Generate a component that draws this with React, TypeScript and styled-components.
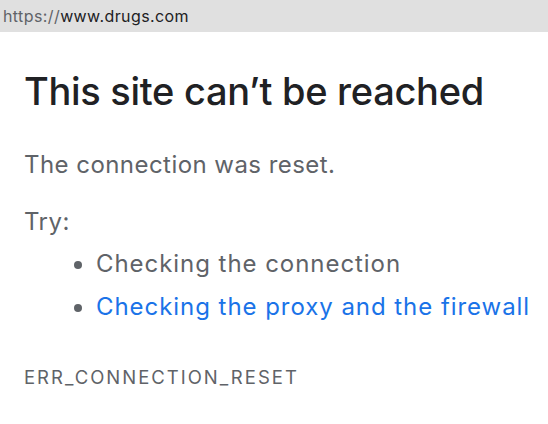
import * as React from 'react';
import styled, { createGlobalStyle } from 'styled-components';

const GlobalStyle = createGlobalStyle`
  html, body {
    margin: 0;
    padding: 0;
    background: #ffffff;
  }
  body {
    font-family: Inter, "Liberation Sans", sans-serif;
    -webkit-font-smoothing: antialiased;
  }
`;

const UrlBar = styled.div`
  height: 32px;
  background: #e0e0e0;
  display: flex;
  align-items: center;
  padding: 0 3px;
  font-size: 16px;
  letter-spacing: 0.4px;
  color: #202124;
`;

const Scheme = styled.span`
  color: #5f6368;
`;

const Page = styled.main`
  padding: 36px 24px 0;
  color: #5f6368;
`;

const Title = styled.h1`
  margin: 0;
  font-size: 38px;
  font-weight: 500;
  line-height: 46px;
  color: #202124;
  letter-spacing: -0.3px;
`;

const Text = styled.p<{ $top: number }>`
  margin: ${(p) => p.$top}px 0 0;
  font-size: 24px;
  line-height: 32px;
  letter-spacing: 0.45px;
`;

const List = styled.ul`
  margin: 4px 0 0;
  padding-left: 72px;
  font-size: 24px;
  line-height: 43px;
  letter-spacing: 0.95px;
  white-space: nowrap;
`;

const Item = styled.li<{ $link?: boolean }>`
  color: ${(p) => (p.$link ? '#1a73e8' : '#5f6368')};
  &::marker {
    color: #5f6368;
  }
`;

const Code = styled.div`
  margin-top: 37px;
  font-size: 18.5px;
  line-height: 24px;
  letter-spacing: 2px;
`;

const App: React.FC = () => {
  return (
    <>
      <GlobalStyle />
      <UrlBar>
        <Scheme>https://</Scheme>www.drugs.com
      </UrlBar>
      <Page>
        <Title>This site can’t be reached</Title>
        <Text $top={35}>The connection was reset.</Text>
        <Text $top={25}>Try:</Text>
        <List>
          <Item>Checking the connection</Item>
          <Item $link>Checking the proxy and the firewall</Item>
        </List>
        <Code>ERR_CONNECTION_RESET</Code>
      </Page>
    </>
  );
};

export default App;
